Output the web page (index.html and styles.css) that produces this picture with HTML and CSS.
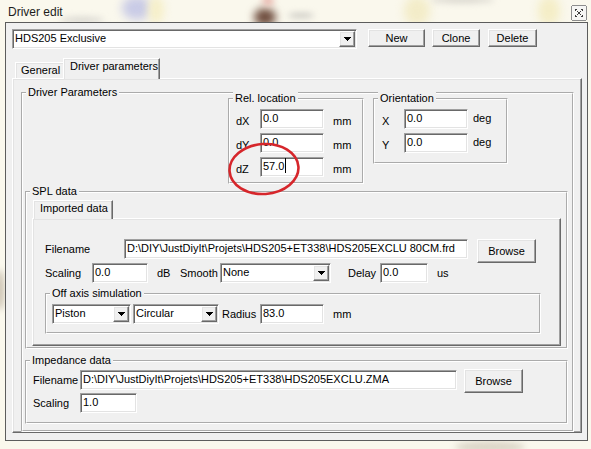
FILE: index.html
```html
<!DOCTYPE html>
<html>
<head>
<meta charset="utf-8">
<title>Driver edit</title>
<link rel="stylesheet" href="styles.css">
</head>
<body>
<div class="screen">
  <div class="blur bl-blue"></div>
  <div class="blur bl-yel1"></div>
  <div class="blur bl-brown"></div>
  <div class="blur bl-pink"></div>
  <div class="blur bl-gray1"></div>
  <div class="blur bl-gray2"></div>
  <div class="blur bl-gray3"></div>
  <div class="blur bl-yel2"></div>
  <div class="blur bl-yel3"></div>
  <div class="blur bl-left"></div>
  <div class="blur bl-bottom"></div>

  <div class="titlebar">
    <span class="title">Driver edit</span>
    <span class="close">
      <svg width="16" height="16" viewBox="0 0 16 16" shape-rendering="crispEdges">
        <rect x="0.5" y="0.5" width="15" height="15" rx="2" fill="#f6f6f4" stroke="#8d8d8d"/>
        <rect x="4" y="4" width="2" height="1" fill="#3c3c3c"/>
        <rect x="10" y="4" width="2" height="1" fill="#3c3c3c"/>
        <rect x="4" y="5" width="1" height="1" fill="#3c3c3c"/>
        <rect x="11" y="5" width="1" height="1" fill="#3c3c3c"/>
        <rect x="6" y="6" width="1" height="1" fill="#3c3c3c"/>
        <rect x="9" y="6" width="1" height="1" fill="#3c3c3c"/>
        <rect x="7" y="7" width="2" height="2" fill="#3c3c3c"/>
        <rect x="6" y="9" width="1" height="1" fill="#3c3c3c"/>
        <rect x="9" y="9" width="1" height="1" fill="#3c3c3c"/>
        <rect x="4" y="10" width="1" height="1" fill="#3c3c3c"/>
        <rect x="11" y="10" width="1" height="1" fill="#3c3c3c"/>
        <rect x="4" y="11" width="2" height="1" fill="#3c3c3c"/>
        <rect x="10" y="11" width="2" height="1" fill="#3c3c3c"/>
      </svg>
    </span>
  </div>

  <div class="window">
    <div class="toprow">
      <div class="combo sunken w-main">
        <span class="val">HDS205 Exclusive</span>
        <span class="drop raised"><svg width="7" height="4" viewBox="0 0 7 4" shape-rendering="crispEdges"><rect x="0" y="0" width="7" height="1"/><rect x="1" y="1" width="5" height="1"/><rect x="2" y="2" width="3" height="1"/><rect x="3" y="3" width="1" height="1"/></svg></span>
      </div>
      <div class="btn raised b-new">New</div>
      <div class="btn raised b-clone">Clone</div>
      <div class="btn raised b-del">Delete</div>
    </div>

    <div class="tabs">
      <div class="tab tab-gen">General</div>
      <div class="tab sel tab-dp">Driver parameters</div>
    </div>

    <div class="tabpanel">
      <div class="group dp">
        <span class="cap">Driver Parameters</span>

        <div class="dp-top">
          <div class="group rel">
            <span class="cap">Rel. location</span>
            <div class="row"><span class="lbl low w24">dX</span><span class="edit sunken w64">0.0</span><span class="lbl low unit-mm">mm</span></div>
            <div class="row"><span class="lbl low w24">dY</span><span class="edit sunken w64">0.0</span><span class="lbl low unit-mm">mm</span></div>
            <div class="row"><span class="lbl low w24">dZ</span><span class="edit sunken w64">57.0<i class="caret"></i></span><span class="lbl low unit-mm">mm</span></div>
          </div>
          <div class="group orient">
            <span class="cap">Orientation</span>
            <div class="row"><span class="lbl low w22">X</span><span class="edit sunken w64">0.0</span><span class="lbl mid unit-deg">deg</span></div>
            <div class="row"><span class="lbl low w22">Y</span><span class="edit sunken w64">0.0</span><span class="lbl mid unit-deg">deg</span></div>
          </div>
        </div>

        <div class="group spl">
          <span class="cap">SPL data</span>
          <div class="subtabs">
            <div class="tab sel tab-imp">Imported data</div>
          </div>
          <div class="subpanel">
            <div class="row r-file">
              <span class="lbl w79">Filename</span>
              <span class="edit sunken w344">D:\DIY\JustDiyIt\Projets\HDS205+ET338\HDS205EXCLU 80CM.frd</span>
              <span class="btn raised browse b-browse1">Browse</span>
            </div>
            <div class="row">
              <span class="lbl w47">Scaling</span>
              <span class="edit sunken w56">0.0</span>
              <span class="lbl u-db">dB</span>
              <span class="lbl w40">Smooth</span>
              <span class="select sunken w111"><span class="val">None</span><span class="drop raised"><svg width="7" height="4" viewBox="0 0 7 4" shape-rendering="crispEdges"><rect x="0" y="0" width="7" height="1"/><rect x="1" y="1" width="5" height="1"/><rect x="2" y="2" width="3" height="1"/><rect x="3" y="3" width="1" height="1"/></svg></span></span>
              <span class="lbl u-delay">Delay</span>
              <span class="edit sunken w48">0.0</span>
              <span class="lbl u-us">us</span>
            </div>
            <div class="group offaxis">
              <span class="cap">Off axis simulation</span>
              <div class="row">
                <span class="select sunken w79"><span class="val">Piston</span><span class="drop raised"><svg width="7" height="4" viewBox="0 0 7 4" shape-rendering="crispEdges"><rect x="0" y="0" width="7" height="1"/><rect x="1" y="1" width="5" height="1"/><rect x="2" y="2" width="3" height="1"/><rect x="3" y="3" width="1" height="1"/></svg></span></span>
                <span class="select sunken w86 s-circ"><span class="val">Circular</span><span class="drop raised"><svg width="7" height="4" viewBox="0 0 7 4" shape-rendering="crispEdges"><rect x="0" y="0" width="7" height="1"/><rect x="1" y="1" width="5" height="1"/><rect x="2" y="2" width="3" height="1"/><rect x="3" y="3" width="1" height="1"/></svg></span></span>
                <span class="lbl u-radius">Radius</span>
                <span class="edit sunken w64">83.0</span>
                <span class="lbl u-mm2">mm</span>
              </div>
            </div>
          </div>
        </div>

        <div class="group imp">
          <span class="cap">Impedance data</span>
          <div class="row r-file2">
            <span class="lbl w47">Filename</span>
            <span class="edit sunken w377">D:\DIY\JustDiyIt\Projets\HDS205+ET338\HDS205EXCLU.ZMA</span>
            <span class="btn raised browse b-browse2">Browse</span>
          </div>
          <div class="row">
            <span class="lbl w47">Scaling</span>
            <span class="edit sunken w57">1.0</span>
          </div>
        </div>
      </div>
    </div>
  </div>

  <svg class="mark" width="82" height="60" viewBox="0 0 82 60">
    <ellipse cx="40" cy="29" rx="34.5" ry="25" fill="none" stroke="#d6262b" stroke-width="2.6" transform="rotate(-4 40 29)"/>
  </svg>
</div>
</body>
</html>
```

FILE: styles.css
```css
* { box-sizing: border-box; margin: 0; padding: 0; }
html, body { width: 591px; height: 449px; overflow: hidden; }
body {
  background: #faf8ed;
  font-family: "Liberation Sans", Arial, sans-serif;
  font-size: 11px;
  line-height: 13px;
  color: #000;
}
.screen { position: relative; width: 591px; height: 449px; overflow: hidden; }

/* blurred glass background */
.blur { position: absolute; border-radius: 50%; filter: blur(4px); }
.bl-blue { left: 122px; top: -4px; width: 30px; height: 24px; background: #c9cbe6; filter: blur(5px); }
.bl-yel1 { left: 148px; top: -4px; width: 16px; height: 28px; background: #f6efc9; filter: blur(4px); }
.bl-brown { left: 254px; top: 8px; width: 22px; height: 18px; background: #6e4c3d; filter: blur(4px); }
.bl-pink { left: 262px; top: -4px; width: 12px; height: 10px; background: #e9b9b0; filter: blur(3px); }
.bl-gray1 { left: 60px; top: 17px; width: 44px; height: 6px; background: #d8d6d0; filter: blur(3px); }
.bl-gray2 { left: 288px; top: 13px; width: 26px; height: 5px; background: #c8c6c0; filter: blur(3px); }
.bl-gray3 { left: 430px; top: -3px; width: 64px; height: 6px; background: #d7d4cc; filter: blur(3px); }
.bl-yel2 { left: 404px; top: -4px; width: 26px; height: 30px; background: #f3ecc8; filter: blur(5px); }
.bl-yel3 { left: 538px; top: -4px; width: 22px; height: 30px; background: #f4edc6; filter: blur(5px); }
.bl-left { left: -4px; top: 270px; width: 8px; height: 40px; background: #c9bfae; filter: blur(3px); }
.bl-bottom { left: 455px; top: 441px; width: 70px; height: 12px; background: #dcd6c8; filter: blur(3px); }

.titlebar {
  position: relative;
  height: 22px;
  display: flex;
  align-items: flex-start;
  justify-content: space-between;
  padding: 0 4px 0 8px;
}
.title { margin-top: 5px; font-size: 12px; line-height: 14px; color: #1c1c1c; }
.close { margin-top: 5px; width: 16px; height: 16px; display: block; }
.close svg { display: block; }

/* window */
.window {
  position: relative;
  margin-left: 5px;
  width: 583px;
  height: 419px;
  background: #f0f0f0;
  border: 1px solid #5c5c5c;
}

/* classic 3d edges */
.sunken {
  background: #fff;
  border: 1px solid;
  border-color: #a0a0a0 #fff #fff #a0a0a0;
  box-shadow: inset 1px 1px 0 #696969, inset -1px -1px 0 #e3e3e3;
}
.raised {
  background: #f0f0f0;
  border: 1px solid;
  border-color: #fff #696969 #696969 #fff;
  box-shadow: inset -1px -1px 0 #a0a0a0, inset 1px 1px 0 #e3e3e3;
}

.toprow { display: flex; align-items: flex-start; padding: 6px 0 0 6px; }
.combo, .select { display: flex; align-items: center; height: 20px; }
.val { flex: 1; padding-left: 2px; line-height: 17px; align-self: flex-start; white-space: nowrap; }
.drop { width: 16px; height: 16px; margin-right: 1px; display: flex; align-items: center; justify-content: center; }
.drop svg { display: block; fill: #000; }
.w-main { width: 345px; }

.btn { display: flex; align-items: center; justify-content: center; height: 18px; }
.b-new { margin-left: 11px; width: 57px; }
.b-clone { margin-left: 7px; width: 48px; }
.b-del { margin-left: 8px; width: 49px; }

/* tabs */
.tabs { display: flex; align-items: flex-end; height: 20px; margin: 9px 0 0 9px; }
.tab { white-space: nowrap; }
.tab-gen {
  width: 48px; height: 16px;
  padding: 1px 0 0 5px;
  border-top: 1px solid #fff;
  border-left: 1px solid #fff;
  box-shadow: inset 1px 1px 0 #e3e3e3;
}
.tab.sel {
  position: relative;
  z-index: 1;
  background: #f0f0f0;
  border-top: 1px solid #fff;
  border-left: 1px solid #fff;
  border-right: 1px solid #696969;
  box-shadow: inset -1px 0 0 #a0a0a0, inset 1px 1px 0 #e3e3e3;
  margin-bottom: -1px;
  padding: 1px 0 0 6px;
}
.tab-dp { width: 97px; height: 21px; }
.tab-imp { width: 80px; height: 19px; padding-top: 1px; }

.tabpanel, .subpanel {
  border: 1px solid;
  border-color: #fff #696969 #696969 #fff;
  box-shadow: inset -1px -1px 0 #a0a0a0, inset 1px 1px 0 #e3e3e3;
}
.tabpanel { margin-left: 6px; width: 570px; height: 355px; }

/* group boxes */
.group { position: relative; border: 2px groove #fff; }
.cap {
  position: absolute;
  top: -8px;
  left: 3px;
  padding: 0 2px;
  background: #f0f0f0;
  line-height: 13px;
  white-space: nowrap;
}
.dp { margin: 13px 0 0 8px; width: 553px; height: 340px; }
.dp-top { display: flex; align-items: flex-start; margin: 4px 0 0 205px; }
.rel { width: 136px; height: 86px; padding: 9px 0 0 6px; }
.orient { margin-left: 9px; width: 135px; height: 66px; padding: 9px 0 0 7px; }
.rel .row + .row, .orient .row + .row { margin-top: 4px; }

.row { display: flex; align-items: flex-start; }
.lbl { display: block; line-height: 20px; height: 20px; white-space: nowrap; }
.lbl.low { padding-top: 4px; line-height: 16px; }
.lbl.mid { line-height: 19px; }
.edit { display: block; height: 20px; padding-left: 2px; line-height: 17px; white-space: nowrap; overflow: hidden; }
.caret { display: inline-block; width: 1px; height: 15px; background: #000; vertical-align: -3px; margin-left: 1px; }

.w22 { width: 22px; }
.w24 { width: 24px; }
.w40 { width: 40px; }
.w47 { width: 47px; }
.w48 { width: 48px; }
.w56 { width: 56px; }
.w57 { width: 57px; }
.w64 { width: 64px; }
.w79 { width: 79px; }
.w86 { width: 86px; }
.w111 { width: 111px; }
.w344 { width: 344px; }
.w377 { width: 377px; }
.unit-mm { margin-left: 9px; }
.unit-deg { margin-left: 5px; }

.spl { margin: 7px 0 0 2px; width: 543px; height: 158px; }
.subtabs { display: flex; height: 25px; padding: 7px 0 0 6px; align-items: flex-end; }
.subpanel { margin-left: 5px; width: 529px; height: 128px; padding-left: 12px; }
.r-file { margin-top: 20px; }
.browse { width: 59px; height: 24px; }
.b-browse1 { margin-left: 9px; }
.u-db { margin-left: 9px; width: 23px; }
.u-delay { margin-left: 17px; width: 32px; }
.u-us { margin-left: 9px; }
.offaxis { margin-top: 10px; width: 496px; height: 41px; padding: 9px 0 0 5px; }
.s-circ { margin-left: 2px; }
.u-radius { margin-left: 3px; width: 38px; }
.u-mm2 { margin-left: 9px; }

.imp { margin: 11px 0 0 2px; width: 543px; height: 64px; padding: 8px 0 0 6px; }
.b-browse2 { margin-left: 7px; margin-top: -1px; }

/* red hand-drawn mark over the dialog */
.mark { position: absolute; left: 224px; top: 140px; }
```
